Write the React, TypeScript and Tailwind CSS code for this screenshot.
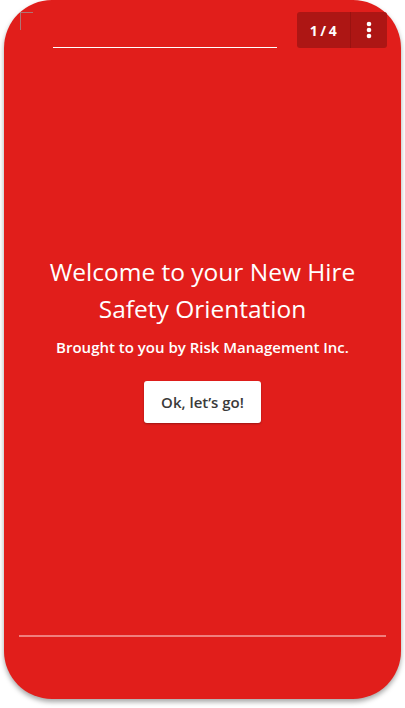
import React from "react";

export default function App() {
  return (
    <div className="w-[405px] h-[708px] bg-white relative overflow-hidden" style={{ fontFamily: "'Open Sans', sans-serif" }}>
      <div className="absolute left-[20px] top-[12px] w-[13px] h-[18px] border-l border-t border-[#9a9a9a] opacity-70 z-10" />
      <div className="ml-[4px] w-[397px] h-[699px] bg-[#e11e1b] rounded-[48px] shadow-[0_3px_5px_rgba(0,0,0,0.35)] flex flex-col">
        <div className="flex items-end mt-[12px] pr-[14px]">
          <div className="pl-[49px]">
            <div className="w-[224px] h-px bg-white" />
          </div>
          <div className="ml-auto w-[90px] h-[36px] rounded-[3px] bg-[#ad1614] flex">
            <div className="w-[53px] flex items-center justify-center text-white text-[14px] font-bold tracking-[2.5px] pl-[2px]">1/4</div>
            <div className="w-px bg-[#9a1210]" />
            <div className="flex-1 flex items-center justify-center">
              <svg width="6" height="18" viewBox="0 0 6 18">
                <circle cx="3" cy="3" r="2.3" fill="white" />
                <circle cx="3" cy="9" r="2.3" fill="white" />
                <circle cx="3" cy="15" r="2.3" fill="white" />
              </svg>
            </div>
          </div>
        </div>
        <div className="flex-1 flex flex-col items-center justify-center text-white text-center pb-[7px]">
          <h1 className="text-[24.5px] leading-[37px] font-normal">Welcome to your New Hire<br />Safety Orientation</h1>
          <p className="mt-[10px] text-[15px] leading-[20px] font-semibold">Brought to you by Risk Management Inc.</p>
          <button className="mt-[24px] w-[117px] h-[42px] bg-white rounded-[3px] text-[#3a3a3a] text-[15px] font-semibold shadow-[0_1px_2px_rgba(0,0,0,0.3)]">Ok, let’s go!</button>
        </div>
        <div className="mx-[15px] h-[2px] bg-[#f07f7d] mb-[62px]" />
      </div>
    </div>
  );
}
